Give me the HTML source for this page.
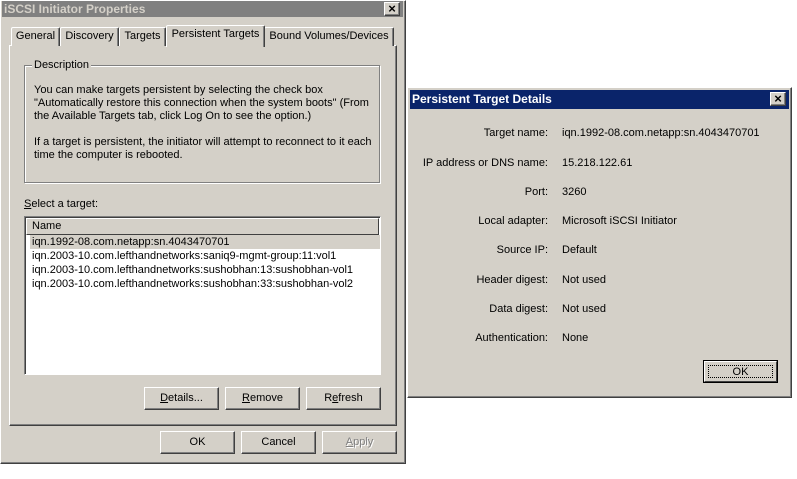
<!DOCTYPE html>
<html><head><style>
*{margin:0;padding:0;box-sizing:border-box}
body{width:797px;height:479px;background:#fff;position:relative;overflow:hidden;font-family:"Liberation Sans",sans-serif;font-size:11px;color:#000}
.a{position:absolute}
.raised{background:#d4d0c8;border:1px solid;border-color:#fff #404040 #404040 #fff;box-shadow:inset -1px -1px 0 #808080,inset 1px 1px 0 #d4d0c8}
.btn{position:absolute;background:#d4d0c8;border:1px solid;border-color:#fff #404040 #404040 #fff;box-shadow:inset -1px -1px 0 #808080;text-align:center;line-height:20px;font-size:11px}
.grp{position:absolute;border:1px solid #808080;box-shadow:1px 1px 0 #fff,inset 1px 1px 0 #fff}
.tab{position:absolute;top:27px;height:19px;background:#d4d0c8;border:1px solid;border-bottom:none;border-color:#fff #404040 #404040 #fff;box-shadow:inset -1px 0 0 #808080;border-radius:2px 2px 0 0;text-align:center;line-height:17px}
.xb{position:absolute;width:16px;height:14px;background:#d4d0c8;border:1px solid;border-color:#fff #404040 #404040 #fff;box-shadow:inset -1px -1px 0 #808080;font-size:13px;line-height:11px;text-align:center;font-weight:bold}
.lbl{position:absolute;width:140px;left:408px;text-align:right}
.val{position:absolute;left:562px}
u{text-decoration:underline}
</style></head><body>
<div class="a raised" style="left:0;top:0;width:406px;height:464px"></div>
<div class="a" style="left:2px;top:1px;width:401px;height:16px;background:#808080;color:#d4d0c8;font-weight:bold;font-size:12px;line-height:16px;padding-left:2px">iSCSI Initiator Properties</div>
<div class="xb" style="left:384px;top:2px">×</div>
<div class="a" style="left:9px;top:45px;width:388px;height:381px;border:1px solid;border-color:#fff #404040 #404040 #fff;box-shadow:inset -1px -1px 0 #808080"></div>
<div class="tab" style="left:11px;width:49px">General</div>
<div class="tab" style="left:60px;width:59px">Discovery</div>
<div class="tab" style="left:119px;width:47px">Targets</div>
<div class="tab" style="left:264px;width:130px">Bound Volumes/Devices</div>
<div class="tab" style="left:166px;top:25px;height:22px;width:99px;line-height:17px;z-index:2">Persistent Targets</div>
<div class="grp" style="left:24px;top:65px;width:356px;height:118px"></div>
<div class="a" style="left:32px;top:59px;background:#d4d0c8;padding:0 2px">Description</div>
<div class="a" style="left:34px;top:84px;line-height:13px">You can make targets persistent by selecting the check box<br>"Automatically restore this connection when the system boots" (From<br>the Available Targets tab, click Log On to see the option.)<br><br>If a target is persistent, the initiator will attempt to reconnect to it each<br>time the computer is rebooted.</div>
<div class="a" style="left:24px;top:198px"><u>S</u>elect a target:</div>
<div class="a" style="left:24px;top:216px;width:357px;height:159px;background:#fff;border:1px solid;border-color:#808080 #fff #fff #808080;box-shadow:inset 1px 1px 0 #404040"></div>
<div class="a" style="left:26px;top:218px;width:353px;height:17px;background:#d4d0c8;border:1px solid;border-color:#fff #404040 #404040 #fff;padding-left:5px;line-height:14px">Name</div>
<div class="a" style="left:30px;top:235px;width:350px;height:14px;background:#d4d0c8"></div>
<div class="a" style="left:32px;top:235px;line-height:14px">iqn.1992-08.com.netapp:sn.4043470701<br>iqn.2003-10.com.lefthandnetworks:saniq9-mgmt-group:11:vol1<br>iqn.2003-10.com.lefthandnetworks:sushobhan:13:sushobhan-vol1<br>iqn.2003-10.com.lefthandnetworks:sushobhan:33:sushobhan-vol2</div>
<div class="btn" style="left:144px;top:387px;width:75px;height:23px"><u>D</u>etails...</div>
<div class="btn" style="left:225px;top:387px;width:75px;height:23px"><u>R</u>emove</div>
<div class="btn" style="left:306px;top:387px;width:75px;height:23px">R<u>e</u>fresh</div>
<div class="btn" style="left:160px;top:431px;width:75px;height:23px">OK</div>
<div class="btn" style="left:241px;top:431px;width:75px;height:23px">Cancel</div>
<div class="btn" style="left:322px;top:431px;width:75px;height:23px;color:#808080;text-shadow:1px 1px 0 #fff"><u>A</u>pply</div>
<div class="a raised" style="left:407px;top:87px;width:385px;height:311px"></div>
<div class="a" style="left:410px;top:90px;width:379px;height:19px;background:#0a246a;color:#fff;font-weight:bold;font-size:12px;line-height:19px;padding-left:2px">Persistent Target Details</div>
<div class="xb" style="left:770px;top:92px">×</div>
<div class="lbl" style="top:127px">Target name:</div><div class="val" style="top:127px">iqn.1992-08.com.netapp:sn.4043470701</div>
<div class="lbl" style="top:157px">IP address or DNS name:</div><div class="val" style="top:157px">15.218.122.61</div>
<div class="lbl" style="top:186px">Port:</div><div class="val" style="top:186px">3260</div>
<div class="lbl" style="top:215px">Local adapter:</div><div class="val" style="top:215px">Microsoft iSCSI Initiator</div>
<div class="lbl" style="top:244px">Source IP:</div><div class="val" style="top:244px">Default</div>
<div class="lbl" style="top:274px">Header digest:</div><div class="val" style="top:274px">Not used</div>
<div class="lbl" style="top:303px">Data digest:</div><div class="val" style="top:303px">Not used</div>
<div class="lbl" style="top:332px">Authentication:</div><div class="val" style="top:332px">None</div>
<div class="a" style="left:703px;top:360px;width:75px;height:23px;border:1px solid #000;background:#d4d0c8"><div style="position:absolute;inset:0;border:1px solid;border-color:#fff #404040 #404040 #fff"></div><div style="position:absolute;left:4px;top:4px;right:4px;bottom:4px;border:1px dotted #000;text-align:center;line-height:12px">OK</div></div>
</body></html>
